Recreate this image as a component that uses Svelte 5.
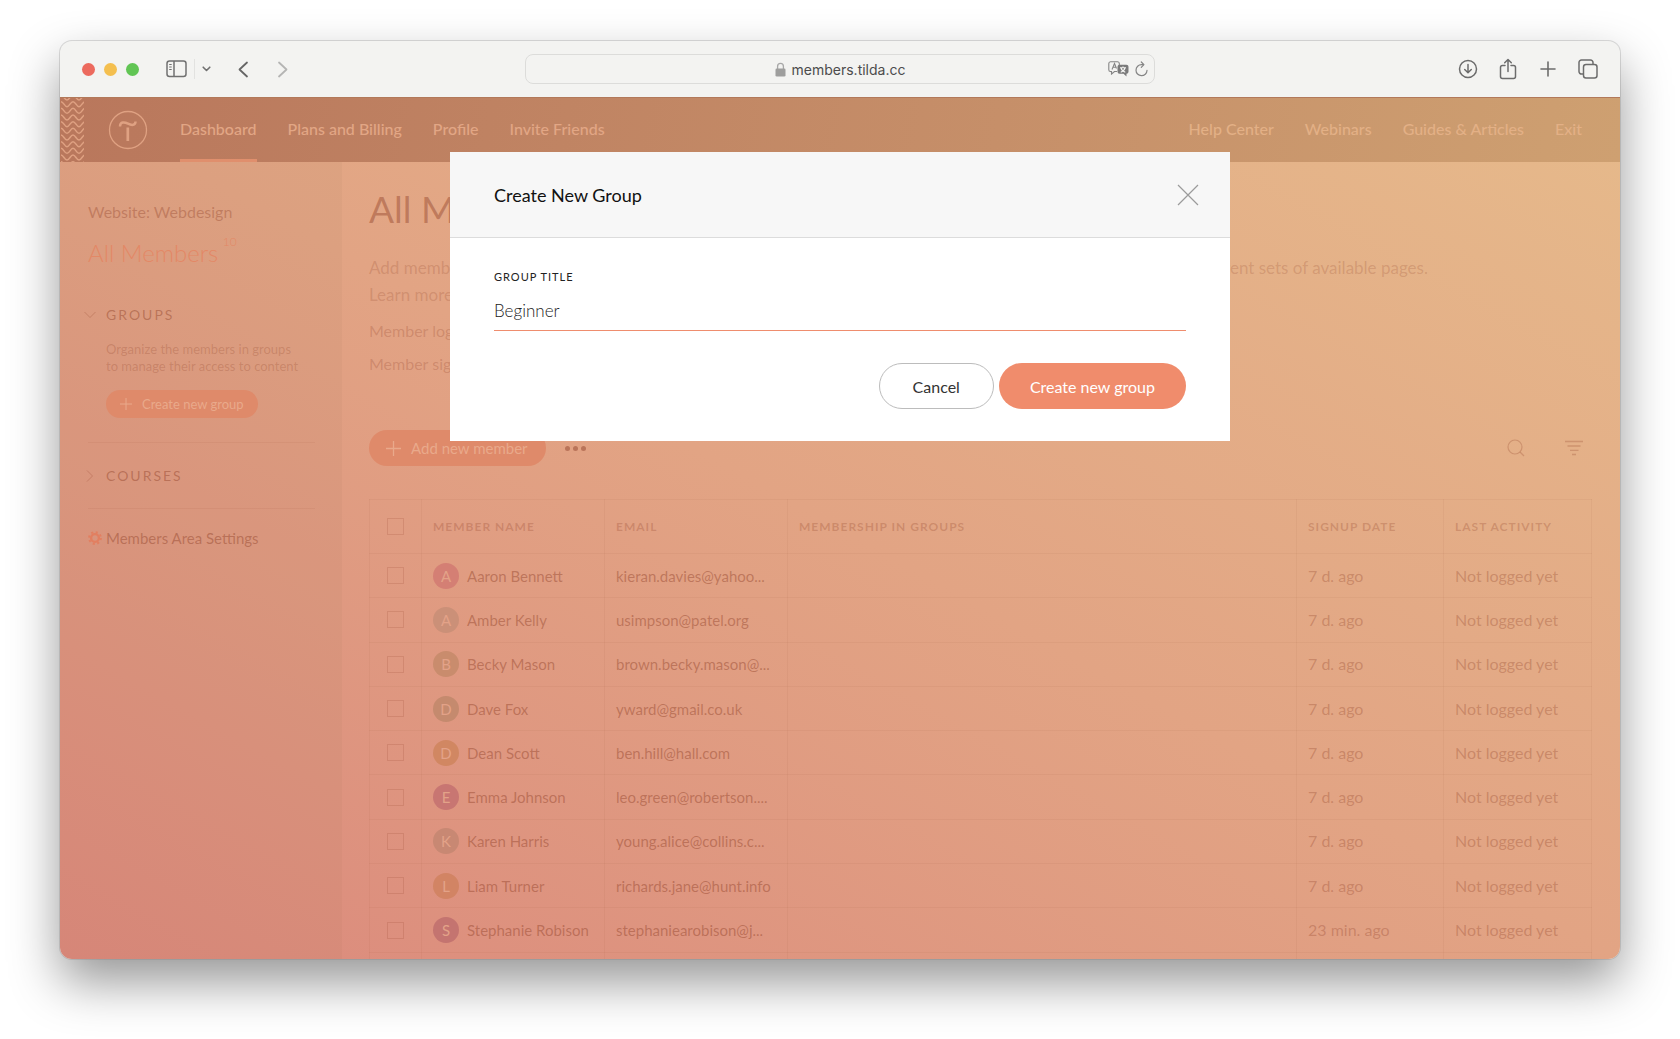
<script>
  const leftNav = ['Dashboard', 'Plans and Billing', 'Profile', 'Invite Friends'];
  const rightNav = ['Help Center', 'Webinars', 'Guides & Articles', 'Exit'];

  // long addresses come already shortened
  const members = [
    { name: 'Aaron Bennett', email: 'kieran.davies@yahoo...', color: '#d47f74', signup: '7 d. ago' },
    { name: 'Amber Kelly', email: 'usimpson@patel.org', color: '#cb9078', signup: '7 d. ago' },
    { name: 'Becky Mason', email: 'brown.becky.mason@...', color: '#c98c6d', signup: '7 d. ago' },
    { name: 'Dave Fox', email: 'yward@gmail.co.uk', color: '#c58a6e', signup: '7 d. ago' },
    { name: 'Dean Scott', email: 'ben.hill@hall.com', color: '#d18762', signup: '7 d. ago' },
    { name: 'Emma Johnson', email: 'leo.green@robertson....', color: '#c87672', signup: '7 d. ago' },
    { name: 'Karen Harris', email: 'young.alice@collins.c...', color: '#c88873', signup: '7 d. ago' },
    { name: 'Liam Turner', email: 'richards.jane@hunt.info', color: '#d28464', signup: '7 d. ago' },
    { name: 'Stephanie Robison', email: 'stephaniearobison@j...', color: '#c47470', signup: '23 min. ago' },
  ];

  // wavy lines on the left edge of the header
  const waves = Array.from({ length: 11 }, (_, i) => i * 20 / 3 - 3);

  let activeNav = $state('Dashboard');
  let groupTitle = $state('Beginner');
  let modalOpen = $state(true);

  function closeModal() {
    modalOpen = false;
  }
</script>

<div class="desktop">
  <div class="window">
    <div class="toolbar">
      <div class="tools">
        <span class="light red"></span>
        <span class="light yellow"></span>
        <span class="light green"></span>
        <button class="tool sidebar-btn" aria-label="Sidebar">
          <svg width="21" height="18" viewBox="0 0 21 18" fill="none" stroke="#707070" stroke-width="1.5">
            <rect x="1" y="1" width="19" height="15.5" rx="2.5" />
            <path d="M8 1v15.500" />
            <path d="M3.200 4.500h2.500M3.200 7h2.500M3.200 9.500h2.500" stroke-width="1" />
          </svg>
        </button>
        <span class="separator"></span>
        <button class="tool menu-btn" aria-label="Tab groups">
          <svg width="9" height="6" viewBox="0 0 9 6" fill="none" stroke="#707070" stroke-width="1.600" stroke-linecap="round" stroke-linejoin="round"><path d="M1.200 1.200l3.300 3.300 3.300-3.300" /></svg>
        </button>
        <button class="tool back-btn" aria-label="Back">
          <svg width="11" height="17" viewBox="0 0 11 17" fill="none" stroke="#666" stroke-width="1.800" stroke-linecap="round" stroke-linejoin="round"><path d="M9 1.500l-7.500 7 7.500 7" /></svg>
        </button>
        <button class="tool forward-btn" aria-label="Forward">
          <svg width="11" height="17" viewBox="0 0 11 17" fill="none" stroke="#b5b5b4" stroke-width="1.800" stroke-linecap="round" stroke-linejoin="round"><path d="M2 1.500l7.500 7-7.500 7" /></svg>
        </button>
      </div>

      <div class="address">
        <span class="host">
          <svg width="11" height="15" viewBox="0 0 11 15">
            <path d="M2.600 7V4.200a2.900 2.900 0 0 1 5.800 0V7" fill="none" stroke="#a8a8a8" stroke-width="1.300" />
            <rect x="0.500" y="6.500" width="10" height="8" rx="1.300" fill="#9e9e9d" />
          </svg>
          members.tilda.cc
        </span>
        <span class="address-actions">
          <button class="tool" aria-label="Translate">
            <svg width="21" height="16" viewBox="0 0 21 16">
              <path d="M9 10.500H6.500L3.500 13v-2.500h-1A1.800 1.800 0 0 1 .8 8.700V2.600A1.800 1.800 0 0 1 2.500.8h7a1.800 1.800 0 0 1 1.800 1.800V4" fill="none" stroke="#858585" stroke-width="1.100" />
              <path d="M4 8.500l2.500-6 2 5M5 6.300h3" fill="none" stroke="#858585" stroke-width="1.100" />
              <path d="M11.500 3.800h7a2 2 0 0 1 2 2v5a2 2 0 0 1-2 2v2.700l-3-2.700h-4a2 2 0 0 1-2-2v-5a2 2 0 0 1 2-2z" fill="#7a7a7a" />
              <path d="M12 6.800h6M15 5.500v1.300M13 7c.5 2 2 3.500 4.300 4.200M17 7c-.5 2-2 3.500-4.300 4.200" fill="none" stroke="#f3f3f1" stroke-width="1.100" />
            </svg>
          </button>
          <button class="tool" aria-label="Reload">
            <svg width="13" height="16" viewBox="0 0 13 16" fill="none" stroke="#858585" stroke-width="1.200" stroke-linecap="round" stroke-linejoin="round">
              <path d="M8 3.700H6.500a5.500 5.500 0 1 0 5.500 5.700" />
              <path d="M6.300 1l2.600 2.700-2.600 2.700" />
            </svg>
          </button>
        </span>
      </div>

      <div class="tools right">
        <button class="tool" aria-label="Downloads">
          <svg width="20" height="20" viewBox="0 0 20 20" fill="none" stroke="#6c6c6c" stroke-width="1.500" stroke-linecap="round" stroke-linejoin="round">
            <circle cx="10" cy="10" r="8.500" /><path d="M10 5.500v8M6.700 10.500l3.300 3.200 3.300-3.200" />
          </svg>
        </button>
        <button class="tool" aria-label="Share">
          <svg width="20" height="22" viewBox="0 0 20 22" fill="none" stroke="#6c6c6c" stroke-width="1.500" stroke-linecap="round" stroke-linejoin="round">
            <path d="M7 7.500H4.500a2 2 0 0 0-2 2v9a2 2 0 0 0 2 2h11a2 2 0 0 0 2-2v-9a2 2 0 0 0-2-2H13" />
            <path d="M10 13.500V1.500M6.700 4.700L10 1.500l3.300 3.200" />
          </svg>
        </button>
        <button class="tool" aria-label="New tab">
          <svg width="20" height="20" viewBox="0 0 20 20" fill="none" stroke="#6c6c6c" stroke-width="1.600" stroke-linecap="round"><path d="M10 3v14M3 10h14" /></svg>
        </button>
        <button class="tool" aria-label="Tab overview">
          <svg width="20" height="20" viewBox="0 0 20 20" fill="none" stroke="#6c6c6c" stroke-width="1.500">
            <rect x="5.500" y="5.500" width="13.500" height="13.500" rx="2.500" />
            <path d="M5.500 15H3.700A2.500 2.500 0 0 1 1 12.500V3.500A2.500 2.500 0 0 1 3.500 1h9A2.500 2.500 0 0 1 15 3.500v2" />
          </svg>
        </button>
      </div>
    </div>

    <div class="page">
      <header>
        <svg class="waves" width="24" height="64" viewBox="0 0 24 64" fill="none" stroke="#dfa182" stroke-width="1.500">
          {#each waves as y}
            <path d="M1 {y} C3.500 {y} 4.500 {y + 5} 7 {y + 5} S10.500 {y} 13 {y} S16.500 {y + 5} 19 {y + 5} S22.500 {y} 25 {y}" />
          {/each}
        </svg>
        <a class="logo" href="/" aria-label="Tilda">
          <svg width="40" height="40" viewBox="0 0 40 40" fill="none" stroke="#dfa182">
            <circle cx="20" cy="20" r="18.500" stroke-width="1.300" />
            <path d="M12 16.500c0-5 4.500-4.500 8-2.800s7.500 2 7.500-2.200" stroke-width="2.500" />
            <path d="M19.800 17.500V31" stroke-width="2.700" />
          </svg>
        </a>
        <nav class="left">
          {#each leftNav as item}
            <a href="#{item}" class:active={activeNav === item} onclick={() => (activeNav = item)}>{item}</a>
          {/each}
        </nav>
        <nav class="right">
          {#each rightNav as item}
            <a href="#{item}">{item}</a>
          {/each}
        </nav>
      </header>

      <div class="body">
        <aside>
          <p class="site">Website: Webdesign</p>
          <a class="all" href="#members">All Members <sup>10</sup></a>
          <section class="groups">
            <h2>
              <svg width="12" height="8" viewBox="0 0 12 8" fill="none" stroke="currentColor"><path d="M0.500 1l5.500 5.500L11.500 1" /></svg>
              GROUPS
            </h2>
            <p class="hint">Organize the members in groups<br />to manage their access to content</p>
            <button class="pill small" onclick={() => (modalOpen = true)}>
              <svg width="12" height="12" viewBox="0 0 12 12" stroke="currentColor"><path d="M6 0v12M0 6h12" /></svg>
              Create new group
            </button>
          </section>
          <section class="courses">
            <h2>
              <svg width="8" height="12" viewBox="0 0 8 12" fill="none" stroke="currentColor"><path d="M1 .5L6.500 6 1 11.500" /></svg>
              COURSES
            </h2>
          </section>
          <a class="settings" href="#settings">
            <svg width="14" height="14" viewBox="0 0 14 14" fill="none" stroke="#e27f60">
              <circle cx="7" cy="7" r="3.900" stroke-width="2.400" />
              <circle cx="7" cy="7" r="5.900" stroke-width="2" stroke-dasharray="2.100 2.534" />
            </svg>
            Members Area Settings
          </a>
        </aside>

        <main>
          <h1>All Members</h1>
          <p class="intro">
            Add members one by one or import them from a file. Create groups and then give every one of them access to different sets of available pages.<br />
            <a href="#learn">Learn more</a>
          </p>
          <p class="link-line">Member login page</p>
          <p class="link-line">Member signup page</p>

          <div class="actions">
            <button class="pill">
              <svg width="15" height="15" viewBox="0 0 15 15" stroke="currentColor" stroke-width="1.300"><path d="M7.500 0v15M0 7.500h15" /></svg>
              Add new member
            </button>
            <button class="dots" aria-label="More actions"><i></i><i></i><i></i></button>
            <button class="icon search" aria-label="Search">
              <svg width="18" height="18" viewBox="0 0 18 18" fill="none" stroke="currentColor" stroke-width="1.200"><circle cx="8" cy="8" r="7" /><path d="M13 13l4 4" /></svg>
            </button>
            <button class="icon" aria-label="Filter">
              <svg width="18" height="16" viewBox="0 0 18 16" stroke="currentColor" stroke-width="1.300"><path d="M0 1.500h18M2.500 6h13M5 10.300h8.500M7 14.500h4" /></svg>
            </button>
          </div>

          <table>
            <colgroup>
              <col class="c-check" /><col class="c-name" /><col class="c-name" /><col /><col class="c-signup" /><col class="c-last" />
            </colgroup>
            <thead>
              <tr>
                <th><input type="checkbox" aria-label="Select all members" /></th>
                <th>MEMBER NAME</th>
                <th>EMAIL</th>
                <th>MEMBERSHIP IN GROUPS</th>
                <th>SIGNUP DATE</th>
                <th>LAST ACTIVITY</th>
              </tr>
            </thead>
            <tbody>
              {#each members as member (member.email)}
                <tr>
                  <td><input type="checkbox" aria-label="Select {member.name}" /></td>
                  <td>
                    <div class="person">
                      <span class="avatar" style="background: {member.color}">{member.name[0]}</span>
                      {member.name}
                    </div>
                  </td>
                  <td>{member.email}</td>
                  <td></td>
                  <td class="muted">{member.signup}</td>
                  <td class="muted">Not logged yet</td>
                </tr>
              {/each}
              <tr><td></td><td></td><td></td><td></td><td></td><td></td></tr>
            </tbody>
          </table>
        </main>
      </div>

      {#if modalOpen}
        <div class="modal" role="dialog" aria-labelledby="modal-title">
          <div class="modal-head">
            <h3 id="modal-title">Create New Group</h3>
            <button class="close" aria-label="Close" onclick={closeModal}>
              <svg width="22" height="22" viewBox="0 0 22 22" stroke="#9b9b9b" stroke-width="1.200"><path d="M1 1l20 20M21 1L1 21" /></svg>
            </button>
          </div>
          <form class="modal-body" onsubmit={(e) => { e.preventDefault(); closeModal(); }}>
            <label for="group-title">GROUP TITLE</label>
            <input id="group-title" type="text" bind:value={groupTitle} />
            <div class="modal-buttons">
              <button type="button" class="cancel" onclick={closeModal}>Cancel</button>
              <button type="submit" class="create">Create new group</button>
            </div>
          </form>
        </div>
      {/if}
    </div>
  </div>
</div>

<style>
  :global(body) {
    margin: 0;
    background: #fff;
  }

  .desktop {
    box-sizing: border-box;
    height: 100vh;
    padding: 41px 60px 80px;
    font-family: Lato, "Liberation Sans", sans-serif;
    font-size: 16px;
    color: rgba(140, 60, 35, 0.42);
  }

  .desktop :where(h1, h2, h3, p) {
    margin: 0;
    font-weight: 400;
  }

  button {
    font: inherit;
    color: inherit;
    border: 0;
    padding: 0;
    background: none;
    cursor: pointer;
  }

  a {
    color: inherit;
    text-decoration: none;
  }

  svg {
    display: block;
    flex: none;
  }

  .window {
    height: 100%;
    display: flex;
    flex-direction: column;
    overflow: hidden;
    border-radius: 12px;
    background: #f3f3f1;
    box-shadow: 0 0 0 1px rgba(120, 120, 120, 0.25), 0 23px 50px rgba(0, 0, 0, 0.41);
  }

  /* browser toolbar */
  .toolbar {
    flex: none;
    height: 56px;
    display: grid;
    grid-template-columns: 1fr 630px 1fr;
    align-items: center;
  }

  .tools {
    display: flex;
    align-items: center;
    padding-left: 22px;
  }

  .tools.right {
    justify-content: flex-end;
    gap: 20px;
    padding: 0 22px 1px 0;
  }

  .light {
    width: 13px;
    height: 13px;
    margin-right: 9px;
    border-radius: 50%;
  }

  .red { background: #ec6a5e; }
  .yellow { background: #f4bf4f; }
  .green { background: #61c554; }

  .sidebar-btn {
    margin-left: 18px;
  }

  .separator {
    width: 1px;
    height: 20px;
    margin: 0 7px;
    background: #e2e2e0;
  }

  .back-btn {
    margin-left: 27px;
  }

  .forward-btn {
    margin-left: 28px;
  }

  .address {
    box-sizing: border-box;
    height: 30px;
    display: grid;
    grid-template-columns: 1fr auto 1fr;
    align-items: center;
    border: 1px solid #dcdcda;
    border-radius: 8px;
    font: 14px Inter, sans-serif;
    color: #4c4c4c;
  }

  .host {
    grid-column: 2;
    display: flex;
    align-items: center;
    gap: 6px;
  }

  .address-actions {
    display: flex;
    justify-content: flex-end;
    align-items: center;
    gap: 6px;
    padding-right: 6px;
  }

  /* site */
  .page {
    position: relative;
    flex: 1;
    min-height: 0;
    display: flex;
    flex-direction: column;
    background: linear-gradient(to top right, #db897c, #e2a484 50%, #e6ba8b);
  }

  header {
    flex: none;
    height: 64px;
    display: flex;
    align-items: center;
    border-top: 1px solid #b2795a;
    background: linear-gradient(100deg, #b9775c, #c68f69 60%, #cea071);
    font-weight: 500;
    color: #e2a685;
  }

  .logo {
    margin: 0 32px 0 24px;
  }

  nav {
    align-self: stretch;
    display: flex;
    gap: 31px;
  }

  nav a {
    display: flex;
    align-items: center;
    padding-bottom: 3px;
    border-bottom: 3px solid transparent;
    border-top: 3px solid transparent;
  }

  nav a.active {
    border-bottom-color: #e08f6d;
  }

  nav.right {
    margin-left: auto;
    padding-right: 38px;
    color: #e3b086;
  }

  .body {
    flex: 1;
    min-height: 0;
    display: flex;
    overflow: hidden;
  }

  aside {
    flex: none;
    box-sizing: border-box;
    width: 282px;
    padding: 40px 27px 40px 28px;
    background: rgba(140, 100, 70, 0.06);
  }

  .site {
    line-height: 20px;
    color: rgba(140, 60, 35, 0.35);
  }

  .all {
    display: block;
    margin-top: 16px;
    font-size: 24px;
    font-weight: 300;
    line-height: 30px;
    color: #e38866;
  }

  sup {
    margin-left: -2px;
    font-size: 12px;
    line-height: 0;
    vertical-align: 16px;
  }

  h2 {
    display: flex;
    align-items: center;
    gap: 10px;
    font-size: 14px;
    line-height: 20px;
    letter-spacing: 2px;
  }

  h2 svg {
    width: 12px;
    margin-left: -4px;
    opacity: 0.6;
  }

  .groups {
    margin-top: 37px;
    padding-bottom: 24px;
    border-bottom: 1px solid rgba(140, 60, 35, 0.07);
  }

  .hint {
    margin: 16px 0 0 18px;
    font-size: 13px;
    line-height: 17px;
    color: rgba(140, 60, 35, 0.24);
    white-space: nowrap;
  }

  .pill {
    height: 36px;
    display: flex;
    align-items: center;
    gap: 10px;
    padding: 0 18px 0 17px;
    border-radius: 18px;
    background: #df8a6a;
    font-size: 15px;
    color: #e9a98b;
  }

  .pill.small {
    height: 28px;
    margin: 15px 0 0 18px;
    padding: 0 14px;
    border-radius: 14px;
    font-size: 13px;
  }

  .courses {
    padding: 23px 0 22px;
    border-bottom: 1px solid rgba(140, 60, 35, 0.07);
  }

  .settings {
    display: flex;
    align-items: center;
    gap: 4px;
    margin-top: 19px;
    font-size: 15px;
    line-height: 20px;
  }

  main {
    flex: 1;
    min-width: 0;
    padding: 20px 28px 0 27px;
  }

  h1 {
    font-size: 37px;
    font-weight: 300;
    line-height: 54px;
  }

  .intro {
    margin: 18px 0 6px;
    font-size: 17px;
    line-height: 27px;
    color: rgba(140, 60, 35, 0.21);
    white-space: nowrap;
  }

  .link-line {
    line-height: 33px;
    color: rgba(140, 60, 35, 0.24);
  }

  .actions {
    display: flex;
    align-items: center;
    margin-top: 50px;
  }

  .dots {
    display: flex;
    gap: 3px;
    margin-left: 19px;
  }

  .dots i {
    width: 5px;
    height: 5px;
    border-radius: 50%;
    background: #ba7459;
  }

  .icon {
    margin-right: 9px;
    color: rgba(140, 60, 35, 0.25);
  }

  .icon.search {
    margin: 0 40px 0 auto;
  }

  table {
    width: 100%;
    height: 498px;
    margin-top: 33px;
    table-layout: fixed;
    border-collapse: collapse;
  }

  .c-check { width: 52px; }
  .c-name { width: 183px; }
  .c-signup { width: 147px; }
  .c-last { width: 148px; }

  th,
  td {
    padding: 0 11px;
    border: 1px solid rgba(140, 60, 35, 0.06);
    text-align: left;
    white-space: nowrap;
  }

  th {
    height: 53px;
    font-size: 12px;
    font-weight: 700;
    letter-spacing: 1px;
    color: rgba(140, 60, 35, 0.26);
  }

  td {
    height: 43px;
    font-size: 15px;
  }

  .muted {
    font-size: 16px;
    line-height: 18px;
    color: rgba(140, 60, 35, 0.3);
  }

  th:first-child,
  td:first-child {
    padding: 0;
    text-align: center;
  }

  input[type="checkbox"] {
    appearance: none;
    display: block;
    width: 17px;
    height: 17px;
    margin: 0 auto;
    border: 1px solid rgba(140, 60, 35, 0.17);
  }

  .person {
    display: flex;
    align-items: center;
    gap: 8px;
  }

  .avatar {
    width: 26px;
    height: 26px;
    border-radius: 50%;
    line-height: 26px;
    text-align: center;
    color: #e3a288;
  }

  /* dialog */
  .modal {
    position: absolute;
    top: 55px;
    left: 25%;
    right: 25%;
    background: #fff;
    color: #111;
  }

  .modal-head {
    height: 85px;
    display: flex;
    align-items: center;
    justify-content: space-between;
    padding: 0 31px 0 44px;
    border-bottom: 1px solid #dcdcdc;
    background: #f7f7f7;
  }

  h3 {
    font-size: 18px;
  }

  .modal-body {
    display: flex;
    flex-direction: column;
    padding: 31px 44px 32px 44px;
  }

  label {
    font-size: 11px;
    line-height: 16px;
    letter-spacing: 1px;
    color: #222;
  }

  input[type="text"] {
    height: 39px;
    padding: 6px 0 0;
    border: 0;
    border-bottom: 1px solid #ef8d6e;
    border-radius: 0;
    outline: none;
    background: none;
    font: 300 17px Lato, sans-serif;
    color: #222;
  }

  .modal-buttons {
    display: flex;
    justify-content: flex-end;
    gap: 5px;
    margin-top: 32px;
  }

  .cancel,
  .create {
    box-sizing: border-box;
    height: 46px;
    padding: 0 33px;
    border-radius: 23px;
  }

  .cancel {
    border: 1px solid #bcbcbc;
    color: #333;
  }

  .create {
    padding: 0 31px;
    background: #f08c6c;
    color: #fff;
  }
</style>
